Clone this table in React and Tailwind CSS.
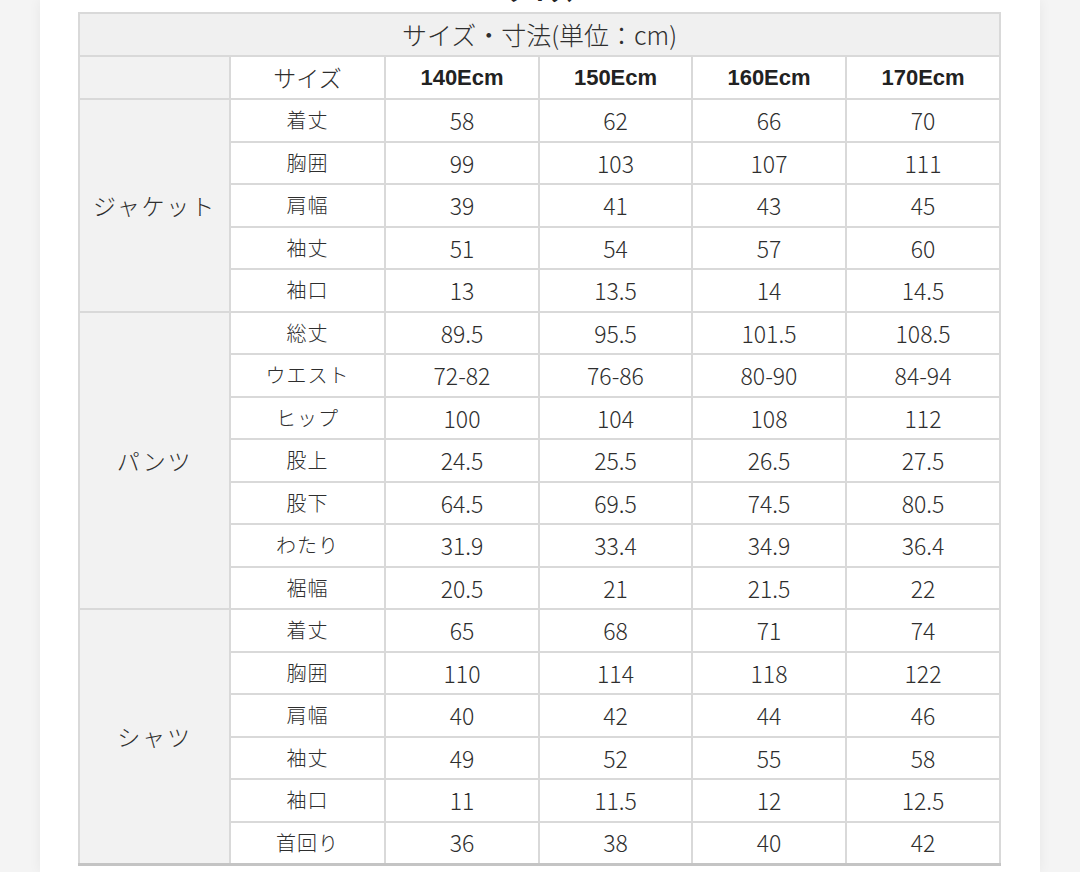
const cols = ["140Ecm", "150Ecm", "160Ecm", "170Ecm"];

const groups = [
  {
    name: "ジャケット",
    rows: [
      ["着丈", "58", "62", "66", "70"],
      ["胸囲", "99", "103", "107", "111"],
      ["肩幅", "39", "41", "43", "45"],
      ["袖丈", "51", "54", "57", "60"],
      ["袖口", "13", "13.5", "14", "14.5"],
    ],
  },
  {
    name: "パンツ",
    rows: [
      ["総丈", "89.5", "95.5", "101.5", "108.5"],
      ["ウエスト", "72-82", "76-86", "80-90", "84-94"],
      ["ヒップ", "100", "104", "108", "112"],
      ["股上", "24.5", "25.5", "26.5", "27.5"],
      ["股下", "64.5", "69.5", "74.5", "80.5"],
      ["わたり", "31.9", "33.4", "34.9", "36.4"],
      ["裾幅", "20.5", "21", "21.5", "22"],
    ],
  },
  {
    name: "シャツ",
    rows: [
      ["着丈", "65", "68", "71", "74"],
      ["胸囲", "110", "114", "118", "122"],
      ["肩幅", "40", "42", "44", "46"],
      ["袖丈", "49", "52", "55", "58"],
      ["袖口", "11", "11.5", "12", "12.5"],
      ["首回り", "36", "38", "40", "42"],
    ],
  },
];

const cell = "border-2 border-[#d9d9d9] text-center align-middle p-0";

export default function App() {
  return (
    <div
      className="w-[1080px] h-[872px] overflow-hidden bg-[#f4f4f4] text-[#2e2e2e] font-light"
      style={{ fontFamily: '"Noto Sans CJK JP", "Noto Sans", sans-serif' }}
    >
      <div className="w-[1000px] h-full ml-[40px] bg-white shadow-[0_0_12px_rgba(0,0,0,0.06)] pl-[38px]">
        {/* heading above, scrolled mostly out of view */}
        <div className="h-[12px] overflow-hidden w-[921px] text-center">
          <div className="text-[24px] font-bold leading-[24px] -mt-[22px] text-[#222]">
            サイズ
          </div>
        </div>
        <table className="border-collapse table-fixed w-[921px] border-2 border-[#d0d0d0] border-b-[3px] border-b-[#c4c4c4]">
          <colgroup>
            <col className="w-[151px]" />
            <col className="w-[155px]" />
            <col className="w-[154px]" />
            <col className="w-[153px]" />
            <col className="w-[154px]" />
            <col className="w-[154px]" />
          </colgroup>
          <tbody>
            <tr className="h-[43px]">
              <td colSpan={6} className={`${cell} bg-[#f0f0f0] text-[25px]`}>
                サイズ・寸法(単位：cm)
              </td>
            </tr>
            <tr className="h-[43px]">
              <td className={`${cell} bg-[#f2f2f2]`} />
              <td className={`${cell} text-[23px]`}>サイズ</td>
              {cols.map((c) => (
                <td
                  key={c}
                  className={`${cell} text-[22px] font-bold text-[#222] font-['Liberation_Sans',sans-serif]`}
                >
                  {c}
                </td>
              ))}
            </tr>
            {groups.map((g) =>
              g.rows.map((r, i) => (
                <tr key={g.name + i} className="h-[42.5px]">
                  {i === 0 && (
                    <td
                      rowSpan={g.rows.length}
                      className={`${cell} bg-[#f2f2f2] text-[23px] tracking-[0.08em]`}
                    >
                      {g.name}
                    </td>
                  )}
                  <td className={`${cell} text-[20px] tracking-[0.05em]`}>{r[0]}</td>
                  {r.slice(1).map((v, j) => (
                    <td key={j} className={`${cell} text-[23px]`}>
                      {v}
                    </td>
                  ))}
                </tr>
              ))
            )}
          </tbody>
        </table>
      </div>
    </div>
  );
}
